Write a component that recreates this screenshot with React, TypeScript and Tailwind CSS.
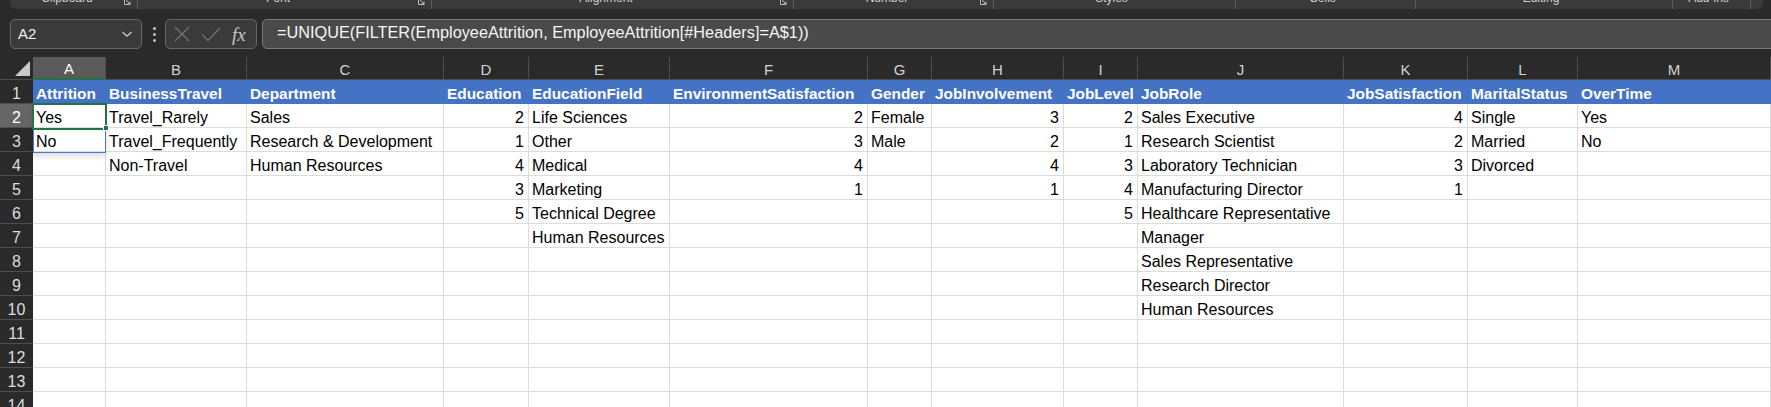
import React from 'react';

/**
 * Excel-style sheet: dark ribbon strip, formula bar and a data grid
 */

const FONT = { fontFamily: '"Liberation Sans", Arial, sans-serif' };

const HEADERS = [
  'Attrition', 'BusinessTravel', 'Department', 'Education', 'EducationField',
  'EnvironmentSatisfaction', 'Gender', 'JobInvolvement', 'JobLevel', 'JobRole',
  'JobSatisfaction', 'MaritalStatus', 'OverTime',
];

const LETTERS = ['A', 'B', 'C', 'D', 'E', 'F', 'G', 'H', 'I', 'J', 'K', 'L', 'M'];

// numeric columns are right aligned like Excel does
const NUMERIC = new Set([3, 5, 7, 8, 10]);

const ROWS: string[][] = [
  ['Yes', 'Travel_Rarely', 'Sales', '2', 'Life Sciences', '2', 'Female', '3', '2', 'Sales Executive', '4', 'Single', 'Yes'],
  ['No', 'Travel_Frequently', 'Research & Development', '1', 'Other', '3', 'Male', '2', '1', 'Research Scientist', '2', 'Married', 'No'],
  ['', 'Non-Travel', 'Human Resources', '4', 'Medical', '4', '', '4', '3', 'Laboratory Technician', '3', 'Divorced', ''],
  ['', '', '', '3', 'Marketing', '1', '', '1', '4', 'Manufacturing Director', '1', '', ''],
  ['', '', '', '5', 'Technical Degree', '', '', '', '5', 'Healthcare Representative', '', '', ''],
  ['', '', '', '', 'Human Resources', '', '', '', '', 'Manager', '', '', ''],
  ['', '', '', '', '', '', '', '', '', 'Sales Representative', '', '', ''],
  ['', '', '', '', '', '', '', '', '', 'Research Director', '', '', ''],
  ['', '', '', '', '', '', '', '', '', 'Human Resources', '', '', ''],
  ['', '', '', '', '', '', '', '', '', '', '', '', ''],
  ['', '', '', '', '', '', '', '', '', '', '', '', ''],
  ['', '', '', '', '', '', '', '', '', '', '', '', ''],
  ['', '', '', '', '', '', '', '', '', '', '', '', ''],
];

const GROUPS = [
  { label: 'Clipboard', w: 'w-[128px]', launcher: true },
  { label: 'Font', w: 'w-[294px]', launcher: true },
  { label: 'Alignment', w: 'w-[362px]', launcher: true },
  { label: 'Number', w: 'w-[200px]', launcher: true },
  { label: 'Styles', w: 'w-[242px]', launcher: false },
  { label: 'Cells', w: 'w-[180px]', launcher: false },
  { label: 'Editing', w: 'w-[257px]', launcher: false },
  { label: 'Add-ins', w: 'w-[78px]', launcher: false },
];

function Launcher() {
  return (
    <svg width="7" height="7" viewBox="0 0 7 7" className="mt-[-2px]">
      <path d="M0.5 0.5 V6.5 H6.5" fill="none" stroke="#bdbdbd" strokeWidth="1" />
      <path d="M2 2 L6 6 M3.5 6 H6 V3.5" fill="none" stroke="#bdbdbd" strokeWidth="1" />
    </svg>
  );
}

function RibbonStrip() {
  return (
    <div className="mx-[10px] mr-[8px] flex h-[9px] overflow-hidden rounded-b-[6px] bg-[#3a3a3a]">
      {GROUPS.map((g) => (
        <div key={g.label} className={`${g.w} flex shrink-0 items-start border-r border-[#5c5c5c] pr-[6px]`}>
          <div className="flex-1 text-center">
            <span className="mt-[-8px] block text-[12px] leading-[12px] text-[#d0d0d0]">{g.label}</span>
          </div>
          {g.launcher && <Launcher />}
        </div>
      ))}
      <div className="flex-1" />
    </div>
  );
}

function FormulaBar() {
  return (
    <div className="mt-[10px] flex h-[30px] items-center">
      {/* Name box */}
      <div className="ml-[10px] flex h-[30px] w-[132px] items-center justify-between rounded-[5px] border border-[#666] bg-[#3a3a3a] pb-[1px] pl-[7px] pr-[8px]">
        <span className="text-[15px] leading-none text-[#f2f2f2]">A2</span>
        <svg width="12" height="8" viewBox="0 0 12 8">
          <path d="M1.5 2 L6 6.2 L10.5 2" fill="none" stroke="#cfcfcf" strokeWidth="1.3" />
        </svg>
      </div>

      {/* grip dots */}
      <div className="mx-[10px] flex w-[4px] flex-col items-center gap-[3px]">
        <span className="h-[3px] w-[3px] rounded-full bg-[#c4c4c4]" />
        <span className="h-[3px] w-[3px] rounded-full bg-[#c4c4c4]" />
        <span className="h-[3px] w-[3px] rounded-full bg-[#c4c4c4]" />
      </div>

      {/* cancel / enter / fx */}
      <div className="ml-[-1px] flex h-[30px] w-[92px] items-center rounded-[5px] border border-[#666] bg-[#3a3a3a] pl-[7px]">
        <svg width="18" height="18" viewBox="0 0 18 18">
          <path d="M2 2 L16 16 M16 2 L2 16" fill="none" stroke="#727272" strokeWidth="1.3" />
        </svg>
        <svg width="22" height="18" viewBox="0 0 22 18" className="ml-[9px]">
          <path d="M2 9.5 L8 15.5 L20 3" fill="none" stroke="#727272" strokeWidth="1.3" />
        </svg>
        <span
          className="ml-[10px] text-[19px] italic leading-none text-[#c8c8c8]"
          style={{ fontFamily: '"Liberation Serif", "Times New Roman", serif' }}
        >
          fx
        </span>
      </div>

      {/* formula input */}
      <div className="ml-[5px] mr-[-10px] flex h-[30px] flex-1 items-center rounded-[5px] border border-[#7a7a7a] bg-[#4a4a4a] pb-[4px] pl-[14px]">
        <span className="text-[16.3px] leading-none text-[#f5f5f5]">
          =UNIQUE(FILTER(EmployeeAttrition, EmployeeAttrition[#Headers]=A$1))
        </span>
      </div>
    </div>
  );
}

function Sheet() {
  return (
    <div className="relative mt-[8px]">
      <div className="grid grid-cols-[33px_73px_141px_197px_85px_141px_198px_64px_132px_74px_206px_124px_110px_193px]">
        {/* corner */}
        <div className="flex h-[23px] items-end justify-end border-b border-[#4e4e4e] pb-[3px] pr-[3px]">
          <svg width="15" height="15" viewBox="0 0 15 15">
            <path d="M15 0 V15 H0 Z" fill="#c9c9c9" />
          </svg>
        </div>
        {LETTERS.map((l, i) => (
          <div
            key={l}
            className={
              i === 0
                ? 'h-[23px] border-b-2 border-r border-b-[#217346] border-r-[#4e4e4e] bg-[#5a5a5a] pt-[3px] text-center text-[15px] leading-[18px] text-white'
                : 'h-[23px] border-b border-r border-[#4e4e4e] pt-[3px] text-center text-[15px] leading-[19px] text-[#d2d2d2]'
            }
          >
            {l}
          </div>
        ))}

        {/* row 1: table header */}
        <div className="h-[24px] border-b border-[#4e4e4e] pt-[4px] text-center text-[16px] leading-[19px] text-[#dedede]">1</div>
        {HEADERS.map((h) => (
          <div
            key={h}
            className="h-[24px] overflow-hidden whitespace-nowrap border-b border-r border-[#4472c4] bg-[#4472c4] pl-[3px] pt-[4px] text-[15.4px] font-bold leading-[19px] text-white"
          >
            {h}
          </div>
        ))}

        {ROWS.map((row, r) => (
          <React.Fragment key={r}>
            <div
              className={`h-[24px] border-b border-[#4e4e4e] pt-[4px] text-center text-[16px] leading-[19px] ${
                r === 0 ? 'bg-[#666666] text-white' : 'text-[#dedede]'
              }`}
            >
              {r + 2}
            </div>
            {row.map((v, c) => (
              <div
                key={c}
                className={`h-[24px] overflow-visible whitespace-nowrap border-b border-r border-[#dcdcdc] bg-white pt-[4px] text-[16px] leading-[19px] text-black ${
                  NUMERIC.has(c) ? 'pr-[4px] text-right' : 'pl-[3px]'
                }`}
              >
                {v}
              </div>
            ))}
          </React.Fragment>
        ))}
      </div>

      {/* spill range outline A2:A3 */}
      <div className="pointer-events-none absolute left-[33px] top-[47px] h-[49px] w-[73px] border border-[#4a7bd0] shadow-[0_3px_6px_rgba(0,0,0,0.15)]" />
      {/* active cell A2 */}
      <div className="pointer-events-none absolute left-[32px] top-[46px] h-[27px] w-[75px] border-2 border-[#217346]" />
      {/* fill handle */}
      <div className="pointer-events-none absolute left-[103px] top-[68px] h-[6px] w-[6px] border border-white bg-[#217346]" />
    </div>
  );
}

export default function App() {
  return (
    <div className="h-[407px] w-[1771px] overflow-hidden bg-[#2a2a2a]" style={FONT}>
      <RibbonStrip />
      <FormulaBar />
      <Sheet />
    </div>
  );
}
